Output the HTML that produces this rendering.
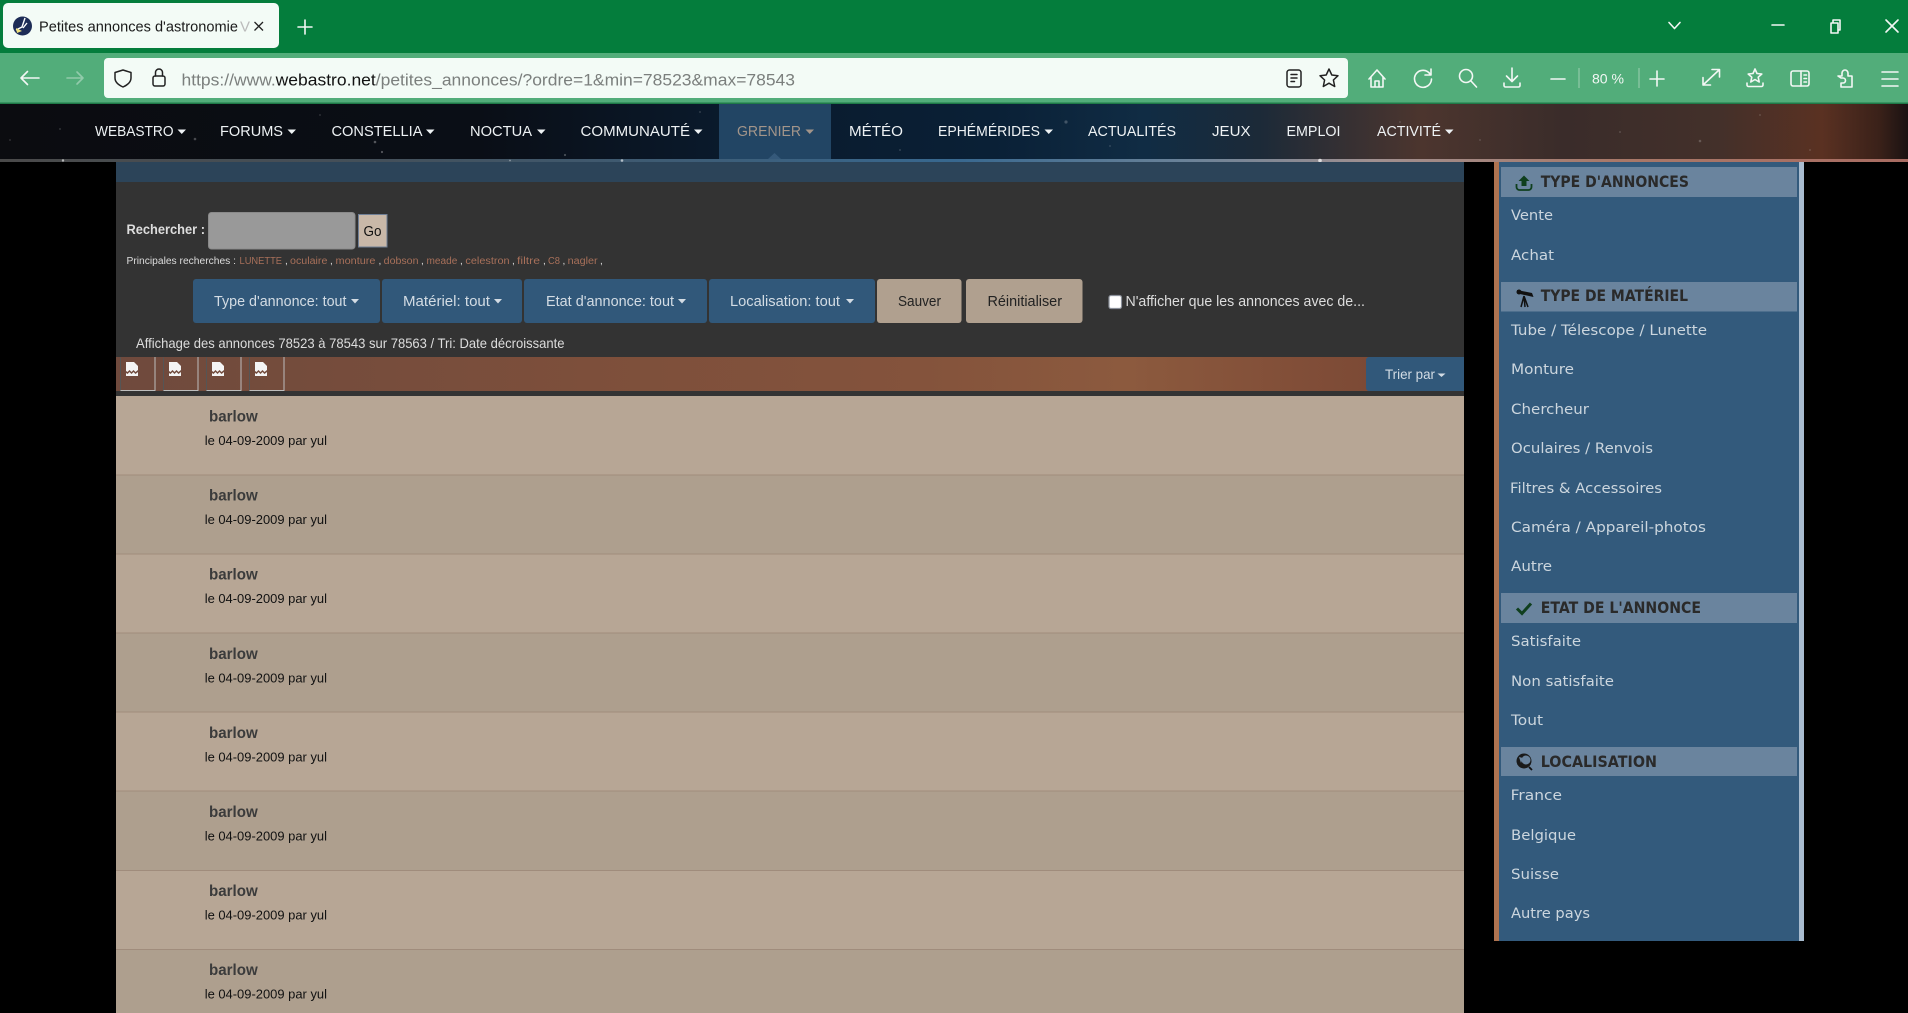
<!DOCTYPE html>
<html lang="fr"><head><meta charset="utf-8"><title>Petites annonces d'astronomie</title>
<style>
html,body{margin:0;padding:0;background:#000;overflow:hidden;width:1908px;height:1013px}
svg{display:block}
text{white-space:pre}
.s{font-family:"Liberation Sans",sans-serif}
.nav text{font-family:"Liberation Sans",sans-serif;font-size:15px;fill:#eef2f4}
.nc{fill:#eef2f4}
.ub text{font-family:"Liberation Sans",sans-serif}
.side text{font-family:"DejaVu Sans",sans-serif;font-size:14px;fill:#ccd6de}
.side .h{font-size:16px;font-weight:bold;fill:#2a2a2a}
.ic{fill:none;stroke:#f2f7f4;stroke-width:1.6;stroke-linecap:round;stroke-linejoin:round}
.ik{fill:none;stroke:#222;stroke-width:1.5;stroke-linecap:round;stroke-linejoin:round}
.b{font-size:16px;font-weight:bold;fill:#3b3b3b}
.d{font-size:13px;fill:#111}
.l{font-size:10px;fill:#a8705a}
.w{font-size:10px;fill:#ddd}
.bt{font-size:15px;fill:#d3dce4}
.bd{font-size:15px;fill:#222}
</style></head><body>
<svg xmlns="http://www.w3.org/2000/svg" width="1908" height="1013" viewBox="0 0 1908 1013">
<defs>
<linearGradient id="ng" x1="0" x2="1" y1="0" y2="0">
<stop offset="0" stop-color="#0b0c10"/><stop offset=".25" stop-color="#0a0e16"/><stop offset=".38" stop-color="#0a1a2c"/><stop offset=".52" stop-color="#0a2036"/><stop offset=".6" stop-color="#102c44"/><stop offset=".66" stop-color="#1c2a38"/><stop offset=".745" stop-color="#4c352e"/><stop offset=".82" stop-color="#3a2c2a"/><stop offset=".9" stop-color="#43302a"/><stop offset=".955" stop-color="#5a3122"/><stop offset=".985" stop-color="#3a2119"/><stop offset="1" stop-color="#1a1212"/>
</linearGradient>
<linearGradient id="sg" x1="0" x2="1" y1="0" y2="0">
<stop offset="0" stop-color="#4a4a4a"/><stop offset=".2" stop-color="#44505a"/><stop offset=".5" stop-color="#38688f"/><stop offset=".62" stop-color="#6a8298"/><stop offset=".72" stop-color="#a09090"/><stop offset=".85" stop-color="#a87868"/><stop offset="1" stop-color="#a86c62"/>
</linearGradient>
<linearGradient id="bg" x1="0" x2="1" y1="0" y2="0">
<stop offset="0" stop-color="#6f4a3d"/><stop offset=".35" stop-color="#7d4f3b"/><stop offset=".6" stop-color="#84533c"/><stop offset=".75" stop-color="#8c5a3e"/><stop offset=".9" stop-color="#7f4c37"/><stop offset="1" stop-color="#754633"/>
</linearGradient>
</defs>

<!-- browser chrome -->
<rect width="1908" height="53" fill="#047d3c"/>
<rect y="53" width="1908" height="50" fill="#52ad7a"/>
<rect y="102.5" width="1908" height="1.5" fill="#1f7a48"/>
<rect x="3" y="3" width="276" height="45" rx="5" fill="#f3fbf6"/>
<circle cx="22.5" cy="26" r="9.5" fill="#1d2c56"/><path d="M25 18l-3 9-6 3M27 23l-4 5" fill="none" stroke="#fff" stroke-width="1.4"/><path d="M16 28l6 3-5 2z" fill="#f1e27a"/>
<text class="s" x="39" y="31.5" font-size="15" fill="#1a1a1a" textLength="199" lengthAdjust="spacingAndGlyphs">Petites annonces d'astronomie</text>
<text class="s" x="240" y="31.5" font-size="15" fill="#bbb">V</text>
<path d="M254.500 22l8.500 8.500M263 22l-8.500 8.500" fill="none" stroke="#222" stroke-width="1.300"/>
<path d="M305 20v14M298 27h14" class="ic" stroke-width="1.500"/>
<path d="M1669 22.500l5.500 6 5.500-6" class="ic" stroke-width="1.300"/>
<path d="M1772 25h12" class="ic" stroke-width="1.200"/>
<path d="M1831 23h7v10h-7zM1833 23v-3h7v10h-2" class="ic" stroke-width="1.200"/>
<path d="M1886 20l12 12M1898 20l-12 12" class="ic" stroke-width="1.200"/>

<path d="M21 78h18M21 78l6.500-6.500M21 78l6.500 6.500" class="ic" stroke-width="1.800"/>
<path d="M67 78h16M83 78l-6-6M83 78l-6 6" class="ic" opacity=".4" stroke-width="1.800"/>
<rect x="104" y="58" width="1244" height="40" rx="4" fill="#f3fbf6"/>
<path d="M123 70l8 2.500v5.500c0 4-3.500 7-8 9-4.500-2-8-5-8-9v-5.500z" class="ik"/>
<rect x="153" y="76" width="12" height="10" rx="2" class="ik"/><path d="M155.500 76v-3.500a3.500 3.500 0 0 1 7 0v3.500" class="ik"/>
<text class="s" x="181.500" y="85.500" font-size="17" fill="#7b7f7d" textLength="613.500" lengthAdjust="spacingAndGlyphs">https://www.<tspan fill="#111">webastro.net</tspan>/petites_annonces/?ordre=1&amp;min=78523&amp;max=78543</text>
<rect x="1287" y="70" width="14" height="17" rx="2.500" class="ik"/><path d="M1291 74.500h6M1291 78h6M1291 81.500h3.500" class="ik" stroke-width="1.300"/>
<path d="M1329 69l2.800 6 6.200.7-4.600 4.300 1.300 6.500-5.700-3.300-5.700 3.300 1.300-6.500-4.600-4.300 6.200-.7z" class="ik"/>
<path d="M1369 79l8-9 8 9M1371 77v10h12v-10M1375 87v-6h4v6" class="ic"/>
<path d="M1430 74a8.500 8.500 0 1 0 1.500 5M1431 69v6h-6" class="ic"/>
<circle cx="1466" cy="76" r="6.500" class="ic"/><path d="M1471 81l5.500 6" class="ic"/>
<path d="M1512 68v13M1506.500 76l5.500 5.500 5.500-5.500M1504 83v2.500a1.500 1.500 0 0 0 1.500 1.500h13a1.500 1.500 0 0 0 1.500-1.500v-2.500" class="ic"/>
<path d="M1551 79h14" class="ic"/>
<path d="M1579 68v20M1639 68v20" stroke="#9fd0b3" stroke-width="1"/>
<text class="s" x="1592" y="83.500" font-size="14" fill="#f2f7f4" textLength="32" lengthAdjust="spacingAndGlyphs">80 %</text>
<path d="M1657 71v15M1650 79h14" class="ic"/>
<path d="M1703 85l16-15M1712 69.500h7.500v7.500M1703 77.500v7.500h7.500" class="ic" stroke-width="2.200"/>
<path d="M1755 69l2 4.500 4.800.5-3.600 3.200 1 4.800-4.200-2.500-4.200 2.500 1-4.800-3.600-3.200 4.800-.5zM1747 83v2a1.500 1.500 0 0 0 1.500 1.500h13a1.500 1.500 0 0 0 1.500-1.500v-2" class="ic"/>
<rect x="1791" y="71" width="18" height="15" rx="2" class="ic"/><path d="M1801 71v15M1804 75h2.500M1804 78.500h2.500M1804 82h2.500" class="ic" stroke-width="1.300"/>
<path d="M1838 76h4v-3a3 3 0 0 1 6 0v3h4v11h-11v-4h2a2.500 2.500 0 0 0 0-5h-2z" class="ic"/>
<path d="M1882 72h16M1882 79h16M1882 86h16" class="ic" stroke-width="1.300"/>

<!-- top nav -->
<rect y="104" width="1908" height="55" fill="url(#ng)"/>
<rect y="159" width="1908" height="3" fill="url(#sg)"/>
<g fill="#fff">
<circle cx="60" cy="129" r=".9" opacity=".2"/><circle cx="195" cy="139" r="1.300" opacity=".25"/><circle cx="375" cy="142" r="1.300" opacity=".3"/><circle cx="382" cy="152" r="1.100" opacity=".3"/><circle cx="10" cy="140" r=".9" opacity=".18"/><circle cx="320" cy="115" r=".9" opacity=".18"/><circle cx="565" cy="155" r="1.100" opacity=".25"/><circle cx="622" cy="160.500" r="1.300" opacity=".6"/><circle cx="63" cy="160.500" r="1.200" opacity=".6"/><circle cx="510" cy="160.500" r=".9" opacity=".4"/><circle cx="1066" cy="122" r="1.600" opacity=".22"/><circle cx="1320" cy="160.500" r="1.800" opacity=".7"/><circle cx="1700" cy="141" r="1.300" opacity=".2"/><circle cx="1760" cy="115" r=".9" opacity=".18"/><circle cx="1620" cy="132" r=".9" opacity=".2"/><circle cx="1400" cy="122" r=".9" opacity=".18"/><circle cx="1480" cy="140" r=".9" opacity=".18"/><circle cx="1810" cy="150" r=".9" opacity=".18"/><circle cx="1220" cy="135" r=".9" opacity=".15"/><circle cx="700" cy="112" r=".9" opacity=".2"/><circle cx="900" cy="150" r=".9" opacity=".2"/><circle cx="1110" cy="146" r=".9" opacity=".18"/>
</g>
<rect x="719" y="104" width="112" height="55" fill="#224564"/>
<path d="M768 159l6.500-6 6.500 6z" fill="#35597a"/>
<g class="nav">
<text x="95" y="136" textLength="78.500" lengthAdjust="spacingAndGlyphs">WEBASTRO</text>
<text x="220" y="136" textLength="63" lengthAdjust="spacingAndGlyphs">FORUMS</text>
<text x="331.500" y="136" textLength="91" lengthAdjust="spacingAndGlyphs">CONSTELLIA</text>
<text x="470" y="136" textLength="62" lengthAdjust="spacingAndGlyphs">NOCTUA</text>
<text x="580.500" y="136" textLength="109.500" lengthAdjust="spacingAndGlyphs">COMMUNAUTÉ</text>
<text x="737" y="136" textLength="64" lengthAdjust="spacingAndGlyphs" style="fill:#a3958a">GRENIER</text>
<text x="849" y="136" textLength="54" lengthAdjust="spacingAndGlyphs">MÉTÉO</text>
<text x="938" y="136" textLength="102" lengthAdjust="spacingAndGlyphs">EPHÉMÉRIDES</text>
<text x="1088" y="136" textLength="88" lengthAdjust="spacingAndGlyphs">ACTUALITÉS</text>
<text x="1212" y="136" textLength="38.500" lengthAdjust="spacingAndGlyphs">JEUX</text>
<text x="1286.500" y="136" textLength="54" lengthAdjust="spacingAndGlyphs">EMPLOI</text>
<text x="1377" y="136" textLength="64" lengthAdjust="spacingAndGlyphs">ACTIVITÉ</text>
</g>
<g class="nc">
<path d="M177.500 129.500h8.500l-4.250 4.500zM287.500 129.500h8.500l-4.250 4.500zM426 129.500h8.500l-4.250 4.500zM537 129.500h8.500l-4.250 4.500zM694 129.500h8.500l-4.250 4.500zM1044.500 129.500h8.500l-4.250 4.500zM1445 129.500h8.500l-4.250 4.500z"/>
</g>
<path d="M805.500 129.500h8.500l-4.250 4.500z" fill="#a3958a"/>

<!-- main panel -->
<rect x="116" y="162" width="1348" height="851" fill="#333"/>
<rect x="116" y="162" width="1348" height="20" fill="#2c4459"/>
<g class="ub">
<text x="126.500" y="234" font-size="13.500" font-weight="bold" fill="#ddd" textLength="78.500" lengthAdjust="spacingAndGlyphs">Rechercher :</text>
<rect x="208.500" y="212.500" width="146.500" height="36.500" rx="3" fill="#999" stroke="#8a8a8a"/>
<rect x="358.500" y="214.500" width="28.500" height="32.500" fill="#c9b8a8" stroke="#6f7f96"/>
<text x="363.500" y="236" font-size="15" fill="#111" textLength="18" lengthAdjust="spacingAndGlyphs">Go</text>
<text class="w" x="126.500" y="264" textLength="109.500" lengthAdjust="spacingAndGlyphs">Principales recherches :</text>
<text class="l" x="239.500" y="264" textLength="42.500" lengthAdjust="spacingAndGlyphs">LUNETTE</text><text class="w" x="285" y="264">,</text>
<text class="l" x="290" y="264" textLength="37.400" lengthAdjust="spacingAndGlyphs">oculaire</text><text class="w" x="330" y="264">,</text>
<text class="l" x="335.500" y="264" textLength="40" lengthAdjust="spacingAndGlyphs">monture</text><text class="w" x="378.500" y="264">,</text>
<text class="l" x="383.700" y="264" textLength="34.800" lengthAdjust="spacingAndGlyphs">dobson</text><text class="w" x="421" y="264">,</text>
<text class="l" x="426.500" y="264" textLength="30.800" lengthAdjust="spacingAndGlyphs">meade</text><text class="w" x="460" y="264">,</text>
<text class="l" x="465.400" y="264" textLength="44.200" lengthAdjust="spacingAndGlyphs">celestron</text><text class="w" x="512" y="264">,</text>
<text class="l" x="517" y="264" textLength="23" lengthAdjust="spacingAndGlyphs">filtre</text><text class="w" x="543" y="264">,</text>
<text class="l" x="548" y="264" textLength="12" lengthAdjust="spacingAndGlyphs">C8</text><text class="w" x="562.500" y="264">,</text>
<text class="l" x="567.600" y="264" textLength="30" lengthAdjust="spacingAndGlyphs">nagler</text><text class="w" x="600" y="264">,</text>

<g fill="#31587a">
<rect x="193" y="279" width="187" height="44" rx="3"/><rect x="382" y="279" width="140" height="44" rx="3"/><rect x="524" y="279" width="183" height="44" rx="3"/><rect x="709" y="279" width="166" height="44" rx="3"/>
</g>
<text class="bt" x="214" y="306" textLength="132.500" lengthAdjust="spacingAndGlyphs">Type d'annonce: tout</text>
<text class="bt" x="403" y="306" textLength="87" lengthAdjust="spacingAndGlyphs">Matériel: tout</text>
<text class="bt" x="546" y="306" textLength="128" lengthAdjust="spacingAndGlyphs">Etat d'annonce: tout</text>
<text class="bt" x="730" y="306" textLength="110" lengthAdjust="spacingAndGlyphs">Localisation: tout</text>
<path d="M351 299h8l-4 4.500zM494 299h8l-4 4.500zM678 299h8l-4 4.500zM846 299h8l-4 4.500z" fill="#d3dce4"/>
<rect x="877" y="279" width="84.500" height="44" rx="3" fill="#b0a08f"/>
<rect x="966" y="279" width="116.500" height="44" rx="3" fill="#b0a08f"/>
<text class="bd" x="898" y="306" textLength="43" lengthAdjust="spacingAndGlyphs">Sauver</text>
<text class="bd" x="987.500" y="306" textLength="74.500" lengthAdjust="spacingAndGlyphs">Réinitialiser</text>
<rect x="1109" y="295.500" width="12.500" height="13" rx="2" fill="#fff" stroke="#8a8f99" stroke-width="1.200"/>
<text x="1125.500" y="306" font-size="15" fill="#ddd" textLength="239.500" lengthAdjust="spacingAndGlyphs">N'afficher que les annonces avec de...</text>
<text x="136" y="348" font-size="14" fill="#ddd" textLength="428.500" lengthAdjust="spacingAndGlyphs">Affichage des annonces 78523 à 78543 sur 78563 / Tri: Date décroissante</text>
</g>

<!-- banner -->
<rect x="116" y="357" width="1348" height="34" fill="url(#bg)"/>
<g fill="none" stroke-width="1">
<path d="M120.500 391V357.500M163.500 391V357.500M206.500 391V357.500M249.500 391V357.500" stroke="#555"/>
<path d="M120.500 390.500h34.500V357M163.500 390.500h34.500V357M206.500 390.500h34.500V357M249.500 390.500h34.500V357" stroke="#bdbdbd"/>
</g>
<g fill="#f4f4f4">
<path d="M126 362h8l4 4v4l-2.500 2-2-2-2 2-2-2-2 2-1.500-1zM126 373l1.500 1 2-2 2 2 2-2 2 2 2.500-2v4h-12z"/>
<path d="M169 362h8l4 4v4l-2.500 2-2-2-2 2-2-2-2 2-1.500-1zM169 373l1.500 1 2-2 2 2 2-2 2 2 2.500-2v4h-12z"/>
<path d="M212 362h8l4 4v4l-2.500 2-2-2-2 2-2-2-2 2-1.500-1zM212 373l1.500 1 2-2 2 2 2-2 2 2 2.500-2v4h-12z"/>
<path d="M255 362h8l4 4v4l-2.500 2-2-2-2 2-2-2-2 2-1.500-1zM255 373l1.500 1 2-2 2 2 2-2 2 2 2.500-2v4h-12z"/>
</g>
<path d="M1464 357h-95a3 3 0 0 0-3 3v28a3 3 0 0 0 3 3h95z" fill="#31587a"/>
<g class="ub"><text x="1385" y="379" font-size="14" fill="#d3dce4" textLength="50" lengthAdjust="spacingAndGlyphs">Trier par</text></g>
<path d="M1437.500 373.500h8l-4 3.500z" fill="#d3dce4"/>

<!-- rows -->
<g>
<rect x="116" y="396" width="1348" height="79" fill="#b7a695"/>
<rect x="116" y="475" width="1348" height="79" fill="#ae9f8e"/>
<rect x="116" y="554" width="1348" height="79" fill="#b7a695"/>
<rect x="116" y="633" width="1348" height="79" fill="#ae9f8e"/>
<rect x="116" y="712" width="1348" height="79" fill="#b7a695"/>
<rect x="116" y="791" width="1348" height="79" fill="#ae9f8e"/>
<rect x="116" y="870" width="1348" height="79" fill="#b7a695"/>
<rect x="116" y="949" width="1348" height="64" fill="#ae9f8e"/>
</g>
<g fill="#a08c7c">
<rect x="116" y="474.500" width="1348" height="1"/><rect x="116" y="553.500" width="1348" height="1"/><rect x="116" y="632.500" width="1348" height="1"/><rect x="116" y="711.500" width="1348" height="1"/><rect x="116" y="790.500" width="1348" height="1"/><rect x="116" y="870" width="1348" height="1"/><rect x="116" y="949" width="1348" height="1"/>
</g>
<g class="ub">
<text class="b" x="209" y="421.500" textLength="48.700" lengthAdjust="spacingAndGlyphs">barlow</text><text class="d" x="204.700" y="445" textLength="122.300" lengthAdjust="spacingAndGlyphs">le 04-09-2009 par yul</text>
<text class="b" x="209" y="500.600" textLength="48.700" lengthAdjust="spacingAndGlyphs">barlow</text><text class="d" x="204.700" y="524.100" textLength="122.300" lengthAdjust="spacingAndGlyphs">le 04-09-2009 par yul</text>
<text class="b" x="209" y="579.700" textLength="48.700" lengthAdjust="spacingAndGlyphs">barlow</text><text class="d" x="204.700" y="603.200" textLength="122.300" lengthAdjust="spacingAndGlyphs">le 04-09-2009 par yul</text>
<text class="b" x="209" y="658.800" textLength="48.700" lengthAdjust="spacingAndGlyphs">barlow</text><text class="d" x="204.700" y="682.300" textLength="122.300" lengthAdjust="spacingAndGlyphs">le 04-09-2009 par yul</text>
<text class="b" x="209" y="737.900" textLength="48.700" lengthAdjust="spacingAndGlyphs">barlow</text><text class="d" x="204.700" y="761.400" textLength="122.300" lengthAdjust="spacingAndGlyphs">le 04-09-2009 par yul</text>
<text class="b" x="209" y="817" textLength="48.700" lengthAdjust="spacingAndGlyphs">barlow</text><text class="d" x="204.700" y="840.500" textLength="122.300" lengthAdjust="spacingAndGlyphs">le 04-09-2009 par yul</text>
<text class="b" x="209" y="896.100" textLength="48.700" lengthAdjust="spacingAndGlyphs">barlow</text><text class="d" x="204.700" y="919.600" textLength="122.300" lengthAdjust="spacingAndGlyphs">le 04-09-2009 par yul</text>
<text class="b" x="209" y="975.200" textLength="48.700" lengthAdjust="spacingAndGlyphs">barlow</text><text class="d" x="204.700" y="998.700" textLength="122.300" lengthAdjust="spacingAndGlyphs">le 04-09-2009 par yul</text>
</g>

<!-- sidebar -->
<rect x="1494" y="162" width="310" height="779" fill="#335a7c"/>
<rect x="1494" y="162" width="5" height="779" fill="#ae7350"/>
<rect x="1799" y="162" width="5" height="779" fill="#a9bccf"/>
<g fill="#6a849e">
<rect x="1501" y="167" width="296" height="30"/><rect x="1501" y="282" width="296" height="29.500"/><rect x="1501" y="593" width="296" height="30"/><rect x="1501" y="747" width="296" height="29"/>
</g>
<g class="side">
<text class="h" x="1540.700" y="187" textLength="148.300" lengthAdjust="spacingAndGlyphs">TYPE D'ANNONCES</text>
<text x="1511" y="220" textLength="42" lengthAdjust="spacingAndGlyphs">Vente</text>
<text x="1511" y="260" textLength="43" lengthAdjust="spacingAndGlyphs">Achat</text>
<text class="h" x="1540.700" y="301" textLength="147.300" lengthAdjust="spacingAndGlyphs">TYPE DE MATÉRIEL</text>
<text x="1511" y="335" textLength="196" lengthAdjust="spacingAndGlyphs">Tube / Télescope / Lunette</text>
<text x="1511" y="374" textLength="63" lengthAdjust="spacingAndGlyphs">Monture</text>
<text x="1511" y="414" textLength="78" lengthAdjust="spacingAndGlyphs">Chercheur</text>
<text x="1511" y="453" textLength="142" lengthAdjust="spacingAndGlyphs">Oculaires / Renvois</text>
<text x="1510" y="493" textLength="152" lengthAdjust="spacingAndGlyphs">Filtres &amp; Accessoires</text>
<text x="1511" y="532" textLength="195" lengthAdjust="spacingAndGlyphs">Caméra / Appareil-photos</text>
<text x="1511" y="571" textLength="41" lengthAdjust="spacingAndGlyphs">Autre</text>
<text class="h" x="1540.700" y="613" textLength="160.300" lengthAdjust="spacingAndGlyphs">ETAT DE L'ANNONCE</text>
<text x="1511" y="646" textLength="70" lengthAdjust="spacingAndGlyphs">Satisfaite</text>
<text x="1511" y="686" textLength="103" lengthAdjust="spacingAndGlyphs">Non satisfaite</text>
<text x="1511" y="725" textLength="32" lengthAdjust="spacingAndGlyphs">Tout</text>
<text class="h" x="1540.700" y="767" textLength="116.300" lengthAdjust="spacingAndGlyphs">LOCALISATION</text>
<text x="1510.700" y="800" textLength="51.300" lengthAdjust="spacingAndGlyphs">France</text>
<text x="1511" y="840" textLength="65" lengthAdjust="spacingAndGlyphs">Belgique</text>
<text x="1511" y="879" textLength="48" lengthAdjust="spacingAndGlyphs">Suisse</text>
<text x="1511" y="918" textLength="79" lengthAdjust="spacingAndGlyphs">Autre pays</text>
</g>
<!-- sidebar icons -->
<path d="M1524 175.500l5.500 5.500h-3v5h-5v-5h-3z" fill="#0f3f1e"/>
<path d="M1516.500 184v3a3 3 0 0 0 3 3h9a3 3 0 0 0 3-3v-3" fill="none" stroke="#0f3f1e" stroke-width="1.800"/>
<path d="M1517 290l15 3 1.500 4-16-3.500z" fill="#111"/><path d="M1524 296l-3 11M1524 296l1 11M1524 296l4 11" stroke="#111" stroke-width="1.500" fill="none"/><circle cx="1519" cy="292" r="2.500" fill="#111"/>
<path d="M1517 608.500l5 5 9-10" fill="none" stroke="#0f3f1e" stroke-width="3"/>
<circle cx="1524" cy="761" r="7.500" fill="#1a1a1a"/><circle cx="1526" cy="760" r="4.500" fill="#6a849e"/><path d="M1529 767l3 3" stroke="#111" stroke-width="1.800"/><path d="M1519 757l4 1-2 5z" fill="#6a849e"/>
</svg>
</body></html>
